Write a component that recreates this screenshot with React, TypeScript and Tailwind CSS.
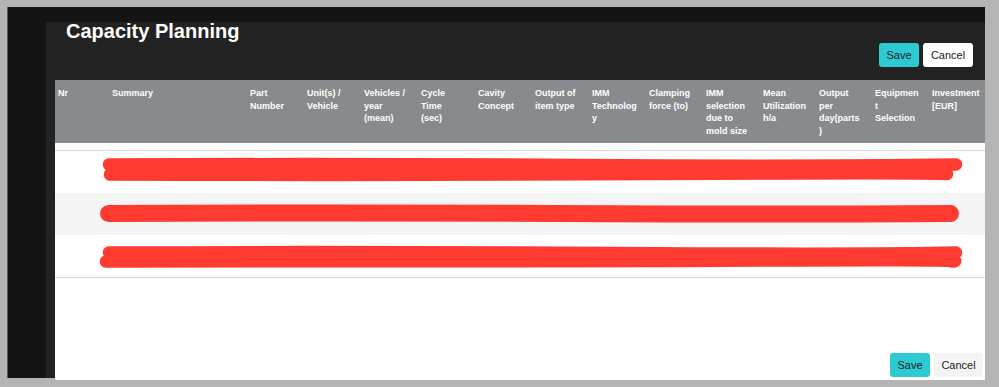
import React from "react"

const columns: { lines: string[] }[] = [
  { lines: ["Nr"] },
  { lines: ["Summary"] },
  { lines: ["Part", "Number"] },
  { lines: ["Unit(s) /", "Vehicle"] },
  { lines: ["Vehicles /", "year", "(mean)"] },
  { lines: ["Cycle", "Time", "(sec)"] },
  { lines: ["Cavity", "Concept"] },
  { lines: ["Output of", "item type"] },
  { lines: ["IMM", "Technolog", "y"] },
  { lines: ["Clamping", "force (to)"] },
  { lines: ["IMM", "selection", "due to", "mold size"] },
  { lines: ["Mean", "Utilization", "h/a"] },
  { lines: ["Output", "per", "day(parts", ")"] },
  { lines: ["Equipmen", "t", "Selection"] },
  { lines: ["Investment", "[EUR]"] },
]

const gridCols =
  "grid grid-cols-[54px_138px_57px_57px_57px_57px_57px_57px_57px_57px_57px_56px_56px_57px_56px]"

// hand-drawn redaction strokes, one set per row (coords relative to the row)
const scribbles: string[][] = [
  ["M54 13.5 Q300 12.5 520 14 T901 13.5", "M55 23.5 Q320 24.5 600 23 T892 23"],
  ["M53.5 20.5 Q280 19.5 500 20.5 T895.5 20.5"],
  ["M54 17.5 Q300 16.5 560 18 T901 17.5", "M51 26.5 Q310 27.5 620 26 T897 26.5"],
]

function Row({ shaded, strokes }: { shaded?: boolean; strokes: string[] }) {
  return (
    <div className={`relative h-[42px] ${shaded ? "bg-[#f4f4f4]" : "bg-white"}`}>
      <svg className="absolute inset-0" width="930" height="42" viewBox="0 0 930 42">
        {strokes.map((d, i) => (
          <path key={i} d={d} fill="none" stroke="#ff3a31" strokeWidth={strokes.length === 1 ? 17 : 12.5} strokeLinecap="round" />
        ))}
      </svg>
    </div>
  )
}

export default function App() {
  return (
    <div className="min-h-screen w-full bg-[#b4b4b4] pt-[7px] pl-[7px] font-['Liberation_Sans',Arial,sans-serif]">
      <div className="flex h-[371px] w-[978px] bg-[#141414] border-l border-[#5a5a5a]">
        {/* sidebar */}
        <div className="w-[38px] shrink-0" />

        <div className="flex flex-1 flex-col pt-[15px]">
          <div className="flex h-[356px] flex-col bg-[#222222] pl-[9px]">
            {/* page heading */}
            <div className="relative h-[58px] shrink-0">
              <h1 className="pl-[11px] text-[20px] leading-[18px] font-bold text-white">Capacity Planning</h1>
              <div className="absolute right-[12px] top-[21px] flex gap-[4px]">
                <button className="h-[24px] w-[40px] rounded-[3px] bg-[#2ccbd4] text-[11px] text-[#1c1c1c]">Save</button>
                <button className="h-[24px] w-[50px] rounded-[3px] bg-white text-[11px] text-[#222]">Cancel</button>
              </div>
            </div>

            {/* table card */}
            <div className="flex h-[300px] w-[930px] shrink-0 flex-col bg-white">
              <div className={`${gridCols} h-[63px] bg-[#888b8d]`}>
                {columns.map((c, i) => (
                  <div key={i} className="pl-[3px] pt-[7px] text-[9px] leading-[12.5px] font-bold text-white">
                    {c.lines.map((l, j) => (
                      <div key={j} className="whitespace-nowrap">{l}</div>
                    ))}
                  </div>
                ))}
              </div>
              <div className="h-[7px]" />
              <div className="border-t border-b border-[#dadada]">
                <Row strokes={scribbles[0]} />
                <Row shaded strokes={scribbles[1]} />
                <Row strokes={scribbles[2]} />
              </div>
              <div className="flex flex-1 items-end justify-end gap-[4px] pr-[2px] pb-[3px]">
                <button className="h-[24px] w-[40px] rounded-[3px] bg-[#2ccbd4] text-[11px] text-[#1c1c1c]">Save</button>
                <button className="h-[24px] w-[49px] rounded-[3px] bg-[#f4f4f4] text-[11px] text-[#222]">Cancel</button>
              </div>
            </div>
          </div>
        </div>
      </div>
    </div>
  )
}
